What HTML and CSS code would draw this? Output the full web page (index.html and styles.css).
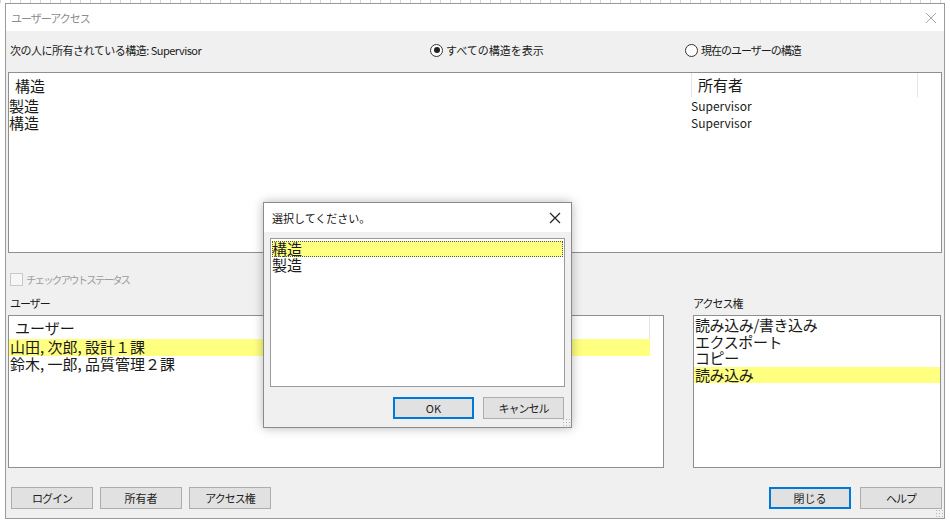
FILE: index.html
```html
<!DOCTYPE html>
<html lang="ja">
<head>
    <meta charset="UTF-8">
    <title>ユーザーアクセス</title>
    <link rel="stylesheet" href="styles.css">
</head>
<body>
    <div class="window">
        <div class="titlebar">
            <span class="title kana">ユーザーアクセス</span>
            <svg class="close-x" width="12" height="12" viewBox="0 0 12 12"><path d="M1 1L11 11M11 1L1 11" stroke="#a8a8a8" stroke-width="1"/></svg>
        </div>
        <div class="content">
            <div class="owner-row">
                <span class="owner-text">次の人に所有されている構造: Supervisor</span>
                <label class="radio radio-all"><span class="radio-dot checked"></span>すべての構造を表示</label>
                <label class="radio kana"><span class="radio-dot"></span>現在のユーザーの構造</label>
            </div>

            <div class="listbox struct-list">
                <div class="list-head">
                    <div class="col-name">構造</div>
                    <div class="col-owner">所有者</div>
                </div>
                <div class="struct-row"><span class="col-name">製造</span><span class="col-owner small">Supervisor</span></div>
                <div class="struct-row"><span class="col-name">構造</span><span class="col-owner small">Supervisor</span></div>
            </div>

            <div class="check-row">
                <span class="checkbox"></span>
                <span class="disabled kana-tight">チェックアウトステータス</span>
            </div>

            <div class="lower">
                <div class="lower-col">
                    <div class="group-label kana">ユーザー</div>
                    <div class="listbox user-list">
                        <div class="user-head"><span>ユーザー</span></div>
                        <div class="item user-item selected">山田, 次郎, 設計１課</div>
                        <div class="item user-item">鈴木, 一郎, 品質管理２課</div>
                    </div>
                </div>
                <div class="lower-col">
                    <div class="group-label kana">アクセス権</div>
                    <div class="listbox access-list">
                        <div class="item">読み込み/書き込み</div>
                        <div class="item">エクスポート</div>
                        <div class="item">コピー</div>
                        <div class="item selected">読み込み</div>
                    </div>
                </div>
            </div>

            <div class="button-row">
                <div class="btn-group">
                    <button class="btn kana">ログイン</button>
                    <button class="btn">所有者</button>
                    <button class="btn kana">アクセス権</button>
                </div>
                <div class="btn-group right">
                    <button class="btn default">閉じる</button>
                    <button class="btn kana">ヘルプ</button>
                </div>
            </div>
        </div>
        <span class="grip"></span>
    </div>

    <div class="dialog">
        <div class="dialog-title">
            <span>選択してください。</span>
            <svg class="close-x dark" width="12" height="12" viewBox="0 0 12 12"><path d="M1 1L11 11M11 1L1 11" stroke="#222" stroke-width="1.2"/></svg>
        </div>
        <div class="dialog-body">
            <div class="listbox pick-list">
                <div class="item selected focus">構造</div>
                <div class="item">製造</div>
            </div>
            <div class="dialog-buttons">
                <button class="btn default">OK</button>
                <button class="btn kana">キャンセル</button>
            </div>
        </div>
        <span class="grip"></span>
    </div>
</body>
</html>
```

FILE: styles.css
```css
body {
    margin: 0;
    width: 950px;
    height: 522px;
    position: relative;
    overflow: hidden;
    font-family: "Noto Sans CJK JP", "Noto Sans", sans-serif;
    font-size: 11px;
    color: #1a1a1a;
    background-color: #fff;
    background-image:
        repeating-linear-gradient(90deg, #d4d4d4 0 1px, transparent 1px 10px);
    background-size: 100% 3px;
    background-repeat: no-repeat;
}
.kana {
    letter-spacing: -1px;
}
.kana-tight {
    font-size: 10.5px;
    letter-spacing: -1.9px;
}
.window {
    position: absolute;
    left: 5px;
    top: 3px;
    width: 940px;
    height: 516px;
    box-sizing: border-box;
    border: 1px solid #9a9a9a;
    display: flex;
    flex-direction: column;
    background: #f0f0f0;
}
.titlebar {
    height: 27px;
    background: #fff;
    display: flex;
    align-items: center;
    justify-content: space-between;
    padding: 0 7px 0 5px;
    color: #8c8c8c;
}
.content {
    flex: 1;
    padding: 0 2px;
    display: flex;
    flex-direction: column;
}
.owner-row {
    height: 38px;
    display: flex;
    align-items: center;
}
.owner-text {
    width: 420px;
    padding-left: 2px;
    letter-spacing: -0.5px;
}
.radio {
    display: flex;
    align-items: center;
    gap: 3px;
}
.radio-all {
    width: 255px;
}
.radio-dot {
    width: 11px;
    height: 11px;
    border: 1px solid #333;
    border-radius: 50%;
    display: flex;
    align-items: center;
    justify-content: center;
    background: #fff;
}
.radio-dot.checked::after {
    content: "";
    width: 6px;
    height: 6px;
    border-radius: 50%;
    background: #222;
}
.listbox {
    background: #fff;
    border: 1px solid #8f8f8f;
    box-sizing: border-box;
    overflow: hidden;
}
.struct-list {
    margin-top: 3px;
    height: 181px;
}
.list-head {
    display: flex;
    height: 24px;
    align-items: center;
    font-size: 15px;
}
.list-head .col-name {
    width: 682px;
    padding-left: 6px;
    box-sizing: border-box;
}
.list-head .col-owner {
    width: 227px;
    height: 24px;
    line-height: 24px;
    padding-left: 6px;
    box-sizing: border-box;
    border-left: 1px solid #e5e5e5;
    border-right: 1px solid #e5e5e5;
}
.struct-row {
    display: flex;
    height: 17px;
    align-items: center;
    font-size: 15px;
}
.struct-row .col-name {
    width: 682px;
}
.small {
    font-size: 12px;
}
.check-row {
    margin-top: 19px;
    height: 14px;
    display: flex;
    align-items: center;
    gap: 3px;
    padding-left: 2px;
}
.checkbox {
    width: 11px;
    height: 11px;
    border: 1px solid #c8c8c8;
    background: #f6f6f6;
}
.disabled {
    color: #9d9d9d;
}
.lower {
    margin-top: 10px;
    display: grid;
    grid-template-columns: 656px 248px;
    column-gap: 29px;
}
.group-label {
    height: 14px;
    line-height: 14px;
    padding-left: 2px;
    margin-bottom: 5px;
}
.lower-col:last-child .group-label {
    padding-left: 0;
}
.user-list,
.access-list {
    height: 153px;
}
.user-head {
    height: 23px;
    width: 641px;
    display: flex;
    align-items: center;
    font-size: 15px;
    padding-left: 6px;
    box-sizing: border-box;
    border-right: 1px solid #e5e5e5;
}
.item {
    font-size: 15px;
    height: 16.5px;
    line-height: 16.5px;
    padding-left: 1px;
    white-space: nowrap;
}
.user-item {
    width: 640px;
}
.access-list {
    padding-top: 1px;
}
.access-list .item {
    letter-spacing: -0.4px;
}
.selected {
    background: #ffff80;
}
.button-row {
    margin-top: 19px;
    display: flex;
    justify-content: space-between;
}
.btn-group {
    display: flex;
    gap: 7px;
    padding-left: 3px;
}
.btn-group.right {
    gap: 9px;
    padding-left: 0;
}
.btn {
    width: 82px;
    height: 22px;
    box-sizing: border-box;
    border: 1px solid #adadad;
    background: #e1e1e1;
    font-family: inherit;
    font-size: 11px;
    color: #222;
    padding: 0;
}
.btn.default {
    border: 2px solid #0078d7;
}
.grip {
    position: absolute;
    right: 1px;
    bottom: 1px;
    width: 8px;
    height: 8px;
    background-image: radial-gradient(circle, #b4b4b4 0.8px, transparent 1px);
    background-size: 3px 3px;
}
.dialog {
    position: absolute;
    left: 263px;
    top: 202px;
    width: 309px;
    height: 226px;
    box-sizing: border-box;
    border: 1px solid #8a8a8a;
    background: #f0f0f0;
    box-shadow: 0 0 10px rgba(0, 0, 0, 0.28);
    display: flex;
    flex-direction: column;
}
.dialog-title {
    height: 29px;
    background: #fff;
    display: flex;
    align-items: center;
    justify-content: space-between;
    padding: 0 10px 0 8px;
    color: #111;
}
.dialog-body {
    padding: 6px 6px 0 6px;
}
.pick-list {
    width: 295px;
    height: 149px;
    border-color: #9a9a9a;
    padding: 2px 1px;
}
.pick-list .item {
    height: 16px;
    line-height: 16px;
    padding-left: 0;
}
.focus {
    outline: 1px dotted #555;
    outline-offset: -1px;
}
.dialog-buttons {
    margin-top: 10px;
    display: flex;
    justify-content: flex-end;
    gap: 9px;
    padding-right: 1px;
}
.dialog-buttons .btn {
    width: 81px;
}
```
